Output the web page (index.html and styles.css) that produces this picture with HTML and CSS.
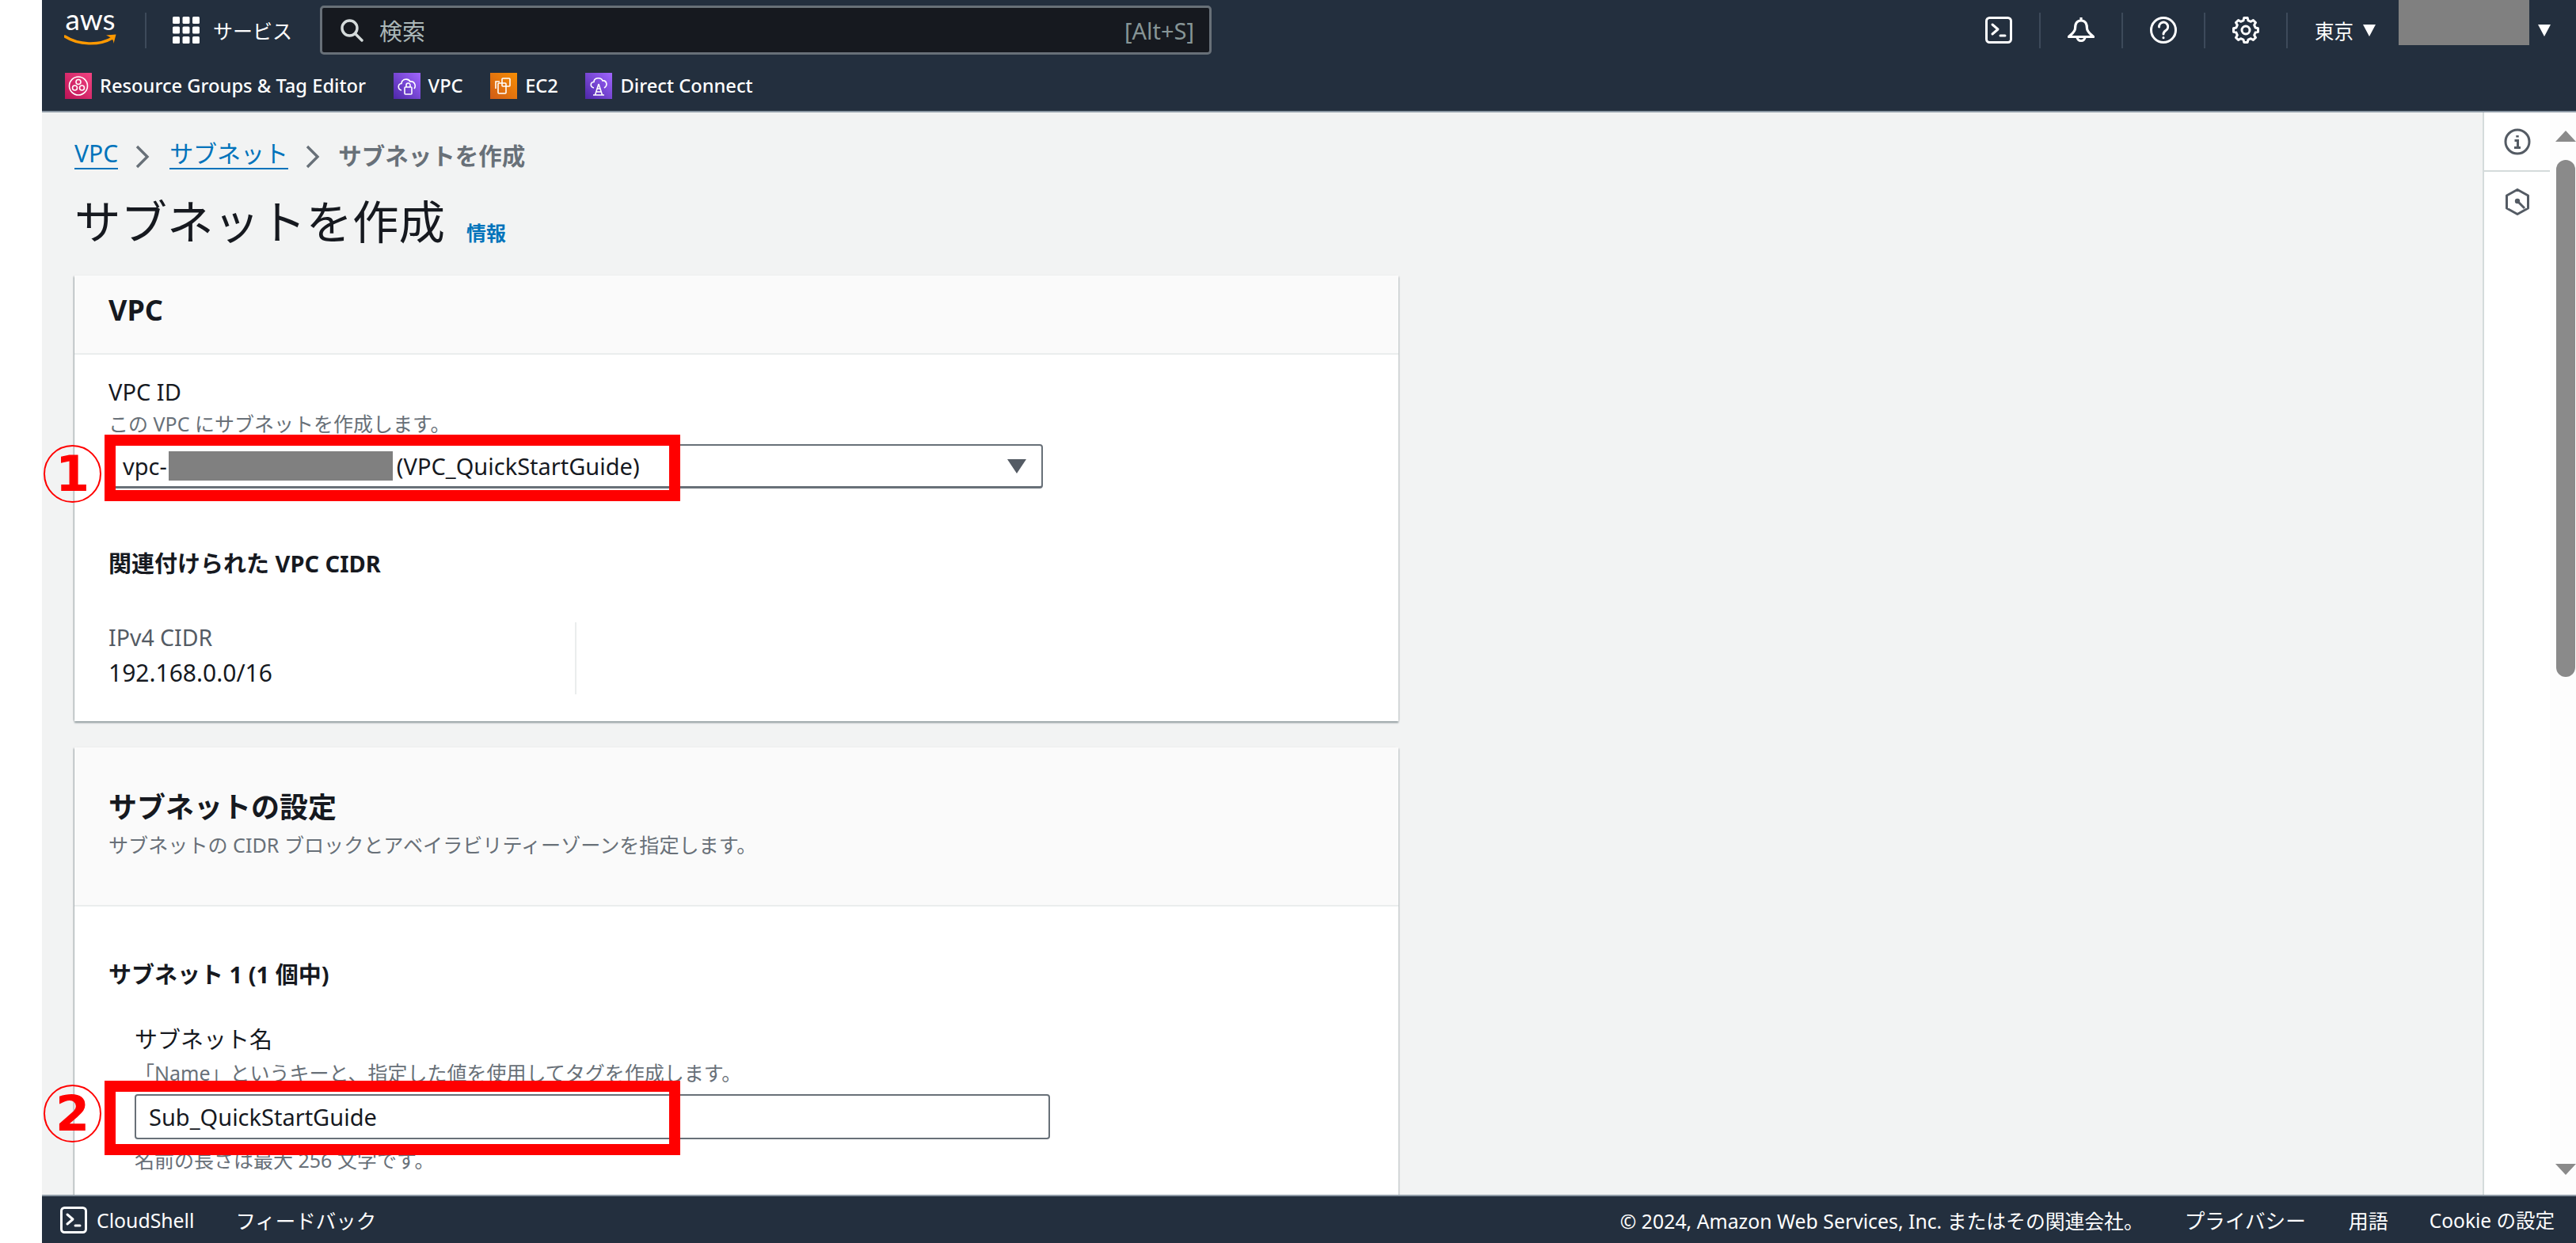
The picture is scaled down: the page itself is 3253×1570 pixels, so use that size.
FILE: index.html
```html
<!DOCTYPE html>
<html lang="ja">
<head>
<meta charset="utf-8">
<title>サブネットを作成</title>
<link rel="stylesheet" href="styles.css">
</head>
<body>
<div class="page">
  <div class="gutter"></div>
  <div class="app">
    <header class="topbar">
      <div class="row-main">
        <div class="logo">
          <span class="logo-word">aws</span>
          <svg viewBox="0 24 66 14" width="66" height="14">
            <path d="M1 27C18 38 44 39 61 29" fill="none" stroke="#f90" stroke-width="3.4" stroke-linecap="round"/>
            <path d="M53 25.5L65.5 24.5L62.5 36C62.5 32 61 29 53 25.5Z" fill="#f90"/>
          </svg>
        </div>
        <span class="nav-sep"></span>
        <svg class="grid-icon" viewBox="0 0 34 34" width="34" height="34" fill="#fff">
          <rect x="0" y="0" width="9" height="9" rx="1.5"/><rect x="12.5" y="0" width="9" height="9" rx="1.5"/><rect x="25" y="0" width="9" height="9" rx="1.5"/>
          <rect x="0" y="12.5" width="9" height="9" rx="1.5"/><rect x="12.5" y="12.5" width="9" height="9" rx="1.5"/><rect x="25" y="12.5" width="9" height="9" rx="1.5"/>
          <rect x="0" y="25" width="9" height="9" rx="1.5"/><rect x="12.5" y="25" width="9" height="9" rx="1.5"/><rect x="25" y="25" width="9" height="9" rx="1.5"/>
        </svg>
        <span class="services">サービス</span>
        <div class="search">
          <svg class="search-icon" viewBox="0 0 30 30" width="30" height="30" fill="none" stroke="#d5dbdb" stroke-width="3.4">
            <circle cx="12.5" cy="12.5" r="9.5"/><path d="M19.5 19.5L28 28" stroke-linecap="round"/>
          </svg>
          <span class="search-text">検索</span>
          <span class="search-key">[Alt+S]</span>
        </div>
        <div class="tools">
          <div class="tool">
            <svg viewBox="0 0 34 34" width="34" height="34" fill="none" stroke="#fff" stroke-width="3" stroke-linecap="round" stroke-linejoin="round">
              <rect x="1.5" y="1.5" width="31" height="31" rx="4"/><path d="M9 10L16 16L9 22"/><path d="M19 24H25"/>
            </svg>
          </div>
          <div class="tool">
            <svg viewBox="0 0 34 34" width="34" height="34" fill="none" stroke="#fff" stroke-width="3.2" stroke-linejoin="round">
              <path d="M17 1V5M17 5C11 5 9.500 10 9.500 15C9.500 19 5 22 1.500 25.500H32.500C29 22 24.500 19 24.500 15C24.500 10 23 5 17 5Z"/><path d="M12 25.500A5 5 0 1 0 22 25.500"/>
            </svg>
          </div>
          <div class="tool">
            <svg viewBox="0 0 34 34" width="34" height="34" fill="none" stroke="#fff" stroke-width="3" stroke-linecap="round">
              <circle cx="17" cy="17" r="15.5"/><path d="M11.5 13A5.6 5.6 0 1 1 20 17.5C18 19 17 20 17 22"/><path d="M17 26.6V26.8"/>
            </svg>
          </div>
          <div class="tool">
            <svg viewBox="-17 -17 34 34" width="34" height="34" fill="none" stroke="#fff" stroke-width="3" stroke-linejoin="round">
              <polygon points="-3,-12.1 -2.2,-15.5 2.2,-15.5 3,-12.1 6.4,-10.7 9.4,-12.5 12.5,-9.4 10.7,-6.4 12.1,-3 15.5,-2.2 15.5,2.2 12.1,3 10.7,6.4 12.5,9.4 9.4,12.5 6.4,10.7 3,12.1 2.2,15.5 -2.2,15.5 -3,12.1 -6.4,10.7 -9.4,12.5 -12.5,9.4 -10.7,6.4 -12.1,3 -15.5,2.2 -15.5,-2.2 -12.1,-3 -10.7,-6.4 -12.5,-9.4 -9.4,-12.5 -6.4,-10.7"/>
              <circle cx="0" cy="0" r="5"/>
            </svg>
          </div>
          <span class="region">東京</span>
          <span class="caret"></span>
          <span class="account"></span>
          <span class="caret caret-end"></span>
        </div>
      </div>
      <div class="row-fav">
        <a class="fav">
          <svg viewBox="0 0 34 33" width="34" height="33">
            <defs><linearGradient id="pk" x1="0" y1="1" x2="1" y2="0"><stop offset="0" stop-color="#bc1356"/><stop offset="1" stop-color="#f34482"/></linearGradient></defs>
            <rect width="34" height="33" fill="url(#pk)"/>
            <g fill="none" stroke="#fff" stroke-width="1.6"><circle cx="17" cy="16.5" r="11.5"/><circle cx="17" cy="11.5" r="3"/><circle cx="12.5" cy="19" r="3"/><circle cx="21.5" cy="19" r="3"/></g>
          </svg>
          <span>Resource Groups &amp; Tag Editor</span>
        </a>
        <a class="fav">
          <svg viewBox="0 0 34 33" width="34" height="33">
            <defs><linearGradient id="pu" x1="0" y1="1" x2="1" y2="0"><stop offset="0" stop-color="#4d27a8"/><stop offset="1" stop-color="#a166ff"/></linearGradient></defs>
            <rect width="34" height="33" fill="url(#pu)"/>
            <g fill="none" stroke="#fff" stroke-width="1.6"><path d="M10 22C5 21 5 14 10 13.500C10 8 18 6 21 11C26 10 29 16 26 20"/><rect x="14" y="18" width="9" height="9" rx="1"/><path d="M16 18V15.500A2.500 2.500 0 0 1 21 15.500V18"/></g>
          </svg>
          <span>VPC</span>
        </a>
        <a class="fav">
          <svg viewBox="0 0 34 33" width="34" height="33">
            <defs><linearGradient id="or" x1="0" y1="1" x2="1" y2="0"><stop offset="0" stop-color="#d05c17"/><stop offset="1" stop-color="#f78e04"/></linearGradient></defs>
            <rect width="34" height="33" fill="url(#or)"/>
            <g fill="none" stroke="#fff" stroke-width="1.6"><rect x="15" y="7" width="10" height="10" rx="1"/><rect x="10" y="13" width="10" height="13" rx="1"/><path d="M7 20V11H12"/></g>
          </svg>
          <span>EC2</span>
        </a>
        <a class="fav">
          <svg viewBox="0 0 34 33" width="34" height="33">
            <rect width="34" height="33" fill="url(#pu)"/>
            <g fill="none" stroke="#fff" stroke-width="1.6"><path d="M11 19C6 18 6 12 11 11.500C11 6 20 5 22 10C27 9 29 16 24 19"/><path d="M17 14L12.500 28M17 14L21.500 28M13.500 24H20.500M14.500 20H19.500M10 28H24"/></g>
          </svg>
          <span>Direct Connect</span>
        </a>
      </div>
    </header>

    <div class="workspace">
      <main class="content">
        <nav class="breadcrumb">
          <a class="crumb-link">VPC</a>
          <svg class="chev" viewBox="0 0 18 30" width="18" height="30" fill="none" stroke="#687078" stroke-width="3.4"><path d="M2 2L15 15L2 28"/></svg>
          <a class="crumb-link">サブネット</a>
          <svg class="chev chev-last" viewBox="0 0 18 30" width="18" height="30" fill="none" stroke="#687078" stroke-width="3.4"><path d="M2 2L15 15L2 28"/></svg>
          <span class="crumb-current">サブネットを作成</span>
        </nav>
        <div class="title-row">
          <h1>サブネットを作成</h1>
          <a class="info-link">情報</a>
        </div>

        <section class="card card-vpc">
          <div class="card-head">
            <h2>VPC</h2>
          </div>
          <div class="card-body">
            <div class="label">VPC ID</div>
            <div class="desc">この VPC にサブネットを作成します。</div>
            <div class="select">
              <span class="select-value">vpc-<span class="redact"></span>(VPC_QuickStartGuide)</span>
              <span class="select-arrow"></span>
              <span class="mark mark-one"></span>
              <span class="num num-one">1</span>
            </div>
            <h3 class="assoc">関連付けられた VPC CIDR</h3>
            <div class="cidr">
              <div class="cidr-cell">
                <div class="cidr-key">IPv4 CIDR</div>
                <div class="cidr-val">192.168.0.0/16</div>
              </div>
            </div>
          </div>
        </section>

        <section class="card card-subnet">
          <div class="card-head card-head-tall">
            <h2>サブネットの設定</h2>
            <p class="card-sub">サブネットの CIDR ブロックとアベイラビリティーゾーンを指定します。</p>
          </div>
          <div class="card-body">
            <h3 class="subnet-count">サブネット 1 (1 個中)</h3>
            <div class="subnet-field">
              <div class="label">サブネット名</div>
              <div class="desc desc-name">「Name」というキーと、指定した値を使用してタグを作成します。</div>
              <div class="input">
                <span>Sub_QuickStartGuide</span>
                <span class="mark mark-two"></span>
                <span class="num num-two">2</span>
              </div>
              <div class="desc desc-hint">名前の長さは最大 256 文字です。</div>
            </div>
          </div>
        </section>
      </main>
      <aside class="rail">
        <div class="rail-item">
          <svg viewBox="0 0 34 34" width="34" height="34" fill="none" stroke="#545b64" stroke-width="3">
            <circle cx="17" cy="17" r="15"/><path d="M17 9V11.500" stroke-width="3.400"/><path d="M13.500 15.500H17.500V24M13 24.500H21"/>
          </svg>
        </div>
        <div class="rail-item rail-item-last">
          <svg viewBox="0 0 30 34" width="30" height="34" fill="none" stroke="#545b64" stroke-width="3" stroke-linejoin="round">
            <path d="M15 1.500L28.500 9V25L15 32.500L1.500 25V9Z"/><circle cx="15" cy="16" r="3.200" fill="#545b64" stroke="none"/><path d="M15 16L24 25"/>
          </svg>
        </div>
      </aside>
      <div class="scrollbar">
        <span class="sb-up"></span>
        <span class="sb-thumb"></span>
        <span class="sb-down"></span>
      </div>
    </div>

    <footer class="footer">
      <svg class="foot-icon" viewBox="0 0 34 34" width="34" height="34" fill="none" stroke="#fff" stroke-width="3" stroke-linecap="round" stroke-linejoin="round">
        <rect x="1.500" y="1.500" width="31" height="31" rx="4"/><path d="M9 10L16 16L9 22"/><path d="M19 24H25"/>
      </svg>
      <span class="foot-shell">CloudShell</span>
      <span class="foot-feedback">フィードバック</span>
      <span class="foot-copy">© 2024, Amazon Web Services, Inc. またはその関連会社。</span>
      <span class="foot-privacy">プライバシー</span>
      <span class="foot-terms">用語</span>
      <span class="foot-cookie">Cookie の設定</span>
    </footer>
  </div>
</div>
</body>
</html>
```
FILE: styles.css
```css
* { box-sizing: border-box; }
html, body { margin: 0; padding: 0; background: #fff; }
body { font-family: "Noto Sans", "Noto Sans CJK JP", sans-serif; color: #16191f; }
h1, h2, h3, p { margin: 0; font-weight: 400; }

.page { display: flex; width: 3253px; height: 1570px; overflow: hidden; }
.gutter { width: 53px; flex: none; background: #fff; }
.app { flex: 1; display: flex; flex-direction: column; min-width: 0; }

/* top bar */
.topbar { flex: none; height: 142px; background: #232f3e; border-bottom: 2px solid #8d99a5; color: #fff; }
.row-main { display: flex; align-items: center; height: 76px; }
.logo { display: flex; flex-direction: column; align-items: center; flex: none; width: 66px; height: 38px; margin-left: 28px; }
.logo-word { display: block; height: 24px; font-family: "Lato", sans-serif; font-size: 37px; line-height: 10px; color: #fff; }
.logo svg { flex: none; display: block; }
.nav-sep { width: 2px; height: 45px; margin-left: 36px; background: #3d4a5a; flex: none; }
.grid-icon { margin-left: 33px; flex: none; }
.services { margin-left: 17px; font-size: 25px; white-space: nowrap; }
.search { display: flex; align-items: center; flex: none; width: 1126px; height: 62px; margin-left: 35px; padding: 0 19px 0 22px; background: #16191f; border: 3px solid #687078; border-radius: 5px; }
.search-icon { flex: none; }
.search-text { margin-left: 20px; font-size: 29px; color: #aab7b8; }
.search-key { margin-left: auto; font-size: 29px; color: #879596; }
.tools { display: flex; align-items: center; margin-left: auto; padding-right: 32px; height: 100%; }
.tool { display: flex; align-items: center; justify-content: center; width: 104px; height: 45px; border-right: 2px solid #3d4a5a; }
.region { margin-left: 34px; font-size: 24.500px; }
.caret { width: 0; height: 0; margin-left: 12px; border-left: 8.500px solid transparent; border-right: 8.500px solid transparent; border-top: 15px solid #fff; }
.caret-end { margin-left: 11px; }
.account { width: 165px; height: 57px; margin-left: 29px; align-self: flex-start; background: #808080; }

.row-fav { display: flex; align-items: center; gap: 34.500px; height: 64px; padding-left: 29px; }
.fav { display: flex; align-items: center; gap: 10px; font-size: 23.700px; font-weight: 500; line-height: 33px; color: #fff; white-space: nowrap; }
.fav svg { flex: none; }

/* work area */
.workspace { flex: 1; display: flex; min-height: 0; }
.content { flex: 1; min-width: 0; padding: 32px 0 0 41px; background: #f2f3f3; overflow: hidden; }

.breadcrumb { display: flex; align-items: center; height: 42px; font-size: 30px; }
.crumb-link { color: #0073bb; border-bottom: 2px solid #0073bb; line-height: 36px; }
.chev { margin: 6px 25px 0 22px; flex: none; }
.chev-last { margin-right: 23px; }
.crumb-current { color: #687078; font-size: 29.500px; font-weight: 700; }

.title-row { display: flex; align-items: flex-end; gap: 27px; height: 70px; margin-top: 29px; }
h1 { font-size: 58.500px; line-height: 72px; }
.info-link { font-size: 25px; font-weight: 700; line-height: 36px; color: #0073bb; margin-bottom: 3px; }

.card { width: 1672px; margin-top: 33px; background: #fff; box-shadow: 0 2px 2px rgba(0, 28, 36, .4), -2px 0 2px -1px rgba(0, 28, 36, .25), 2px 0 2px -1px rgba(0, 28, 36, .1); }
.card-vpc { height: 563px; }
.card-subnet { height: 700px; }
.card-head { height: 100px; padding: 0 43px; background: #fafafa; border-bottom: 2px solid #eaeded; }
.card-head h2 { font-size: 36px; font-weight: 700; line-height: 88px; }
.card-head-tall { height: 201px; padding-top: 46px; }
.card-head-tall h2 { line-height: 60px; }
.card-sub { margin-top: 1px; font-size: 25.100px; line-height: 32px; color: #687078; white-space: nowrap; }

.card-body { padding: 28px 43px 0; }
.label { font-size: 29px; line-height: 38px; }
.desc { font-size: 25px; line-height: 34px; margin-top: 4px; color: #687078; white-space: nowrap; }

.select { position: relative; display: flex; align-items: center; width: 1180px; height: 56px; margin-top: 9px; padding: 0 19px 0 16px; background: #fff; border: 2px solid #687078; border-bottom-width: 3px; border-radius: 4px; font-size: 29px; white-space: nowrap; }
.select-value { display: inline-flex; align-items: center; }
.redact { width: 283px; height: 37px; margin: 0 5px 0 2px; background: #808080; }
.select-arrow { width: 0; height: 0; margin-left: auto; border-left: 12px solid transparent; border-right: 12px solid transparent; border-top: 18px solid #545b64; }

.mark { position: absolute; display: block; width: 727px; border: 14px solid #f00; }
.mark-one { left: -7px; top: -14px; height: 84px; }
.mark-two { left: -40px; top: -19px; height: 94px; }

.num { position: absolute; display: flex; align-items: center; justify-content: center; width: 73px; height: 73px; border: 2px solid #f00; border-radius: 50%; font-family: "DejaVu Sans", sans-serif; font-size: 62px; font-weight: 700; line-height: 1; color: #f00; }
.num-one { left: -84px; top: -1px; }
.num-two { left: -117px; top: -14px; }

.assoc { margin-top: 76px; font-size: 29px; font-weight: 700; line-height: 38px; }
.cidr { margin-top: 55px; }
.cidr-cell { width: 591px; height: 91px; border-right: 2px solid #eaeded; }
.cidr-key { font-size: 28.500px; line-height: 38px; color: #545b64; }
.cidr-val { margin-top: 7px; font-size: 30px; line-height: 38px; }

.subnet-count { font-size: 29px; font-weight: 700; line-height: 38px; margin-top: 39px; }
.subnet-field { margin-top: 44px; padding-left: 33px; }
.desc-name { margin-top: 6px; line-height: 34px; }
.input { position: relative; display: flex; align-items: center; width: 1156px; height: 57px; margin-top: 10px; padding: 0 16px; background: #fff; border: 2px solid #687078; border-radius: 4px; font-size: 29px; }
.desc-hint { margin-top: 9px; }

/* side rail and scrollbar */
.rail { flex: none; width: 85px; background: #fff; border-left: 2px solid #d5dbdb; }
.rail-item { display: flex; align-items: center; justify-content: center; height: 75px; border-bottom: 2px solid #d5dbdb; }
.rail-item-last { border-bottom: 0; }
.scrollbar { flex: none; display: flex; flex-direction: column; width: 33px; background: #fdfdfd; }
.sb-up, .sb-down { width: 0; height: 0; margin-left: 7px; border-left: 13px solid transparent; border-right: 13px solid transparent; }
.sb-up { margin-top: 23px; border-bottom: 14px solid #8a8a8a; }
.sb-thumb { width: 24px; height: 653px; margin: 23px 0 0 8px; background: #8a8a8a; border-radius: 12px; }
.sb-down { margin-top: auto; margin-bottom: 25px; border-top: 14px solid #8a8a8a; }

/* footer */
.footer { flex: none; display: flex; align-items: center; height: 61px; padding: 0 27px 0 23px; background: #232f3e; border-top: 2px solid #8d99a5; color: #fff; font-size: 25px; white-space: nowrap; }
.foot-icon { flex: none; }
.foot-shell { margin-left: 12px; font-size: 24.800px; }
.foot-feedback { margin-left: 52px; font-size: 25.500px; }
.foot-copy { margin-left: auto; font-size: 24.800px; }
.foot-privacy { margin-left: 52px; font-size: 25.600px; }
.foot-terms { margin-left: 54px; }
.foot-cookie { margin-left: 52px; font-size: 24.500px; }
```
